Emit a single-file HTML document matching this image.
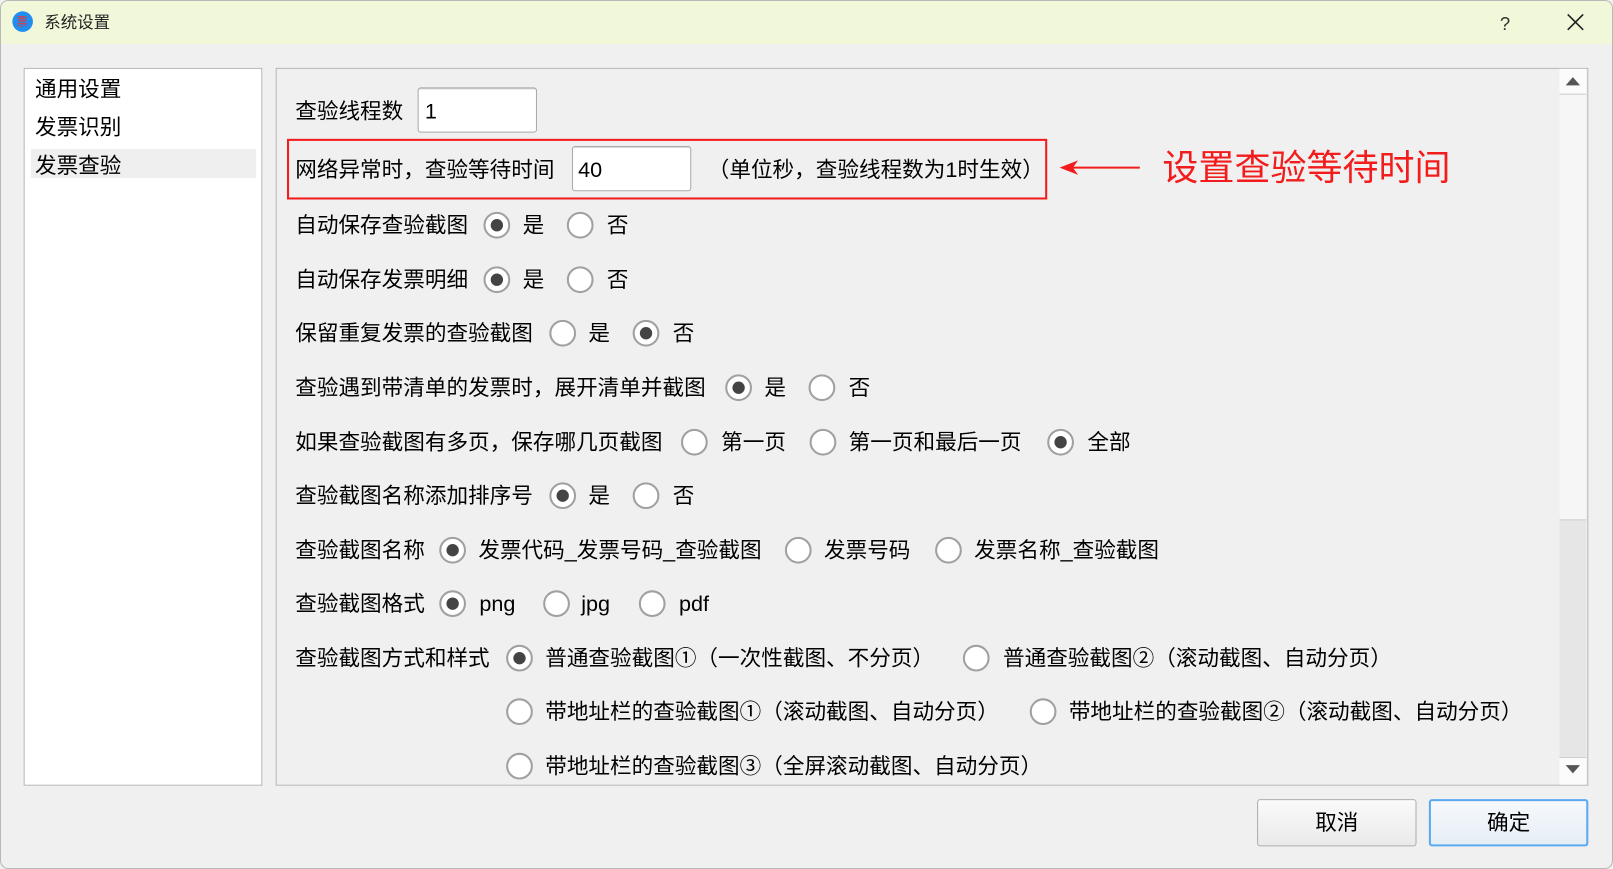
<!DOCTYPE html>
<html><head><meta charset="utf-8"><style>
html,body{margin:0;padding:0;width:1613px;height:869px;overflow:hidden;background:#f0f0f0;}
#w{position:absolute;left:0;top:0;width:1568px;height:845px;transform:scale(1.0287,1.0284);transform-origin:0 0;font-family:"Liberation Sans","Noto Sans CJK SC",sans-serif;color:#000;}
.a{position:absolute;}
.t{position:absolute;font-size:21px;line-height:30px;white-space:nowrap;margin-top:2px;}
.r{position:absolute;width:22px;height:22px;border:2px solid #a0a0a0;border-radius:50%;background:#fff;box-sizing:content-box;margin-top:1px;}
.r.c::after{content:"";position:absolute;left:5px;top:5px;width:12px;height:12px;border-radius:50%;background:#444;}
.in{position:absolute;background:#fff;border:1px solid #a8a8a8;border-radius:3px;box-shadow:inset 0 1px 0 #ddd;}
.btn{position:absolute;border:1px solid #adadad;border-radius:3px;background:linear-gradient(#fafafa,#eaeaea);font-size:21px;text-align:center;line-height:45px;}
</style></head><body><div id="w">
<div class="a" style="left:0;top:0;width:1566px;height:843px;border:1px solid #b8b8b8;border-radius:8px;background:#f0f0f0;overflow:hidden;">
<div class="a" style="left:0;top:0;width:1566px;height:42px;background:#f1f8d9;"></div>
</div>
<div class="a" style="left:12px;top:11px;width:20px;height:20px;border-radius:50%;background:#1e8ef0;"></div>
<div class="a" style="left:16px;top:13px;font-size:11px;color:#e33;">票</div>
<div class="t" style="left:43px;top:6px;font-size:16px;color:#222;">系统设置</div>
<div class="t" style="left:1458px;top:6px;font-size:18px;color:#333;">?</div>
<svg class="a" style="left:1523px;top:13px" width="17" height="17"><path d="M1 1L16 16M16 1L1 16" stroke="#222" stroke-width="1.6"/></svg>

<div class="a" style="left:23px;top:66px;width:230px;height:696px;background:#fff;border:1px solid #b8b8b8;"></div>
<div class="a" style="left:30px;top:145px;width:219px;height:28px;background:#efefef;"></div>
<div class="t" style="left:34px;top:71px;">通用设置</div>
<div class="t" style="left:34px;top:108px;">发票识别</div>
<div class="t" style="left:34px;top:145px;">发票查验</div>

<div class="a" style="left:268px;top:66px;width:1274px;height:696px;border:1px solid #b8b8b8;background:#f0f0f0;"></div>
<div class="a" style="left:1516px;top:67px;width:26px;height:695px;background:#e6e6e6;"></div>
<div class="a" style="left:1516px;top:92px;width:26px;height:413px;background:#f6f6f6;border-bottom:1px solid #ccc;"></div>
<div class="a" style="left:1516px;top:67px;width:26px;height:24px;background:#fbfbfb;border-bottom:1px solid #ccc;"></div>
<div class="a" style="left:1516px;top:736px;width:26px;height:26px;background:#fbfbfb;border-top:1px solid #ccc;"></div>
<svg class="a" style="left:1521px;top:73px" width="16" height="12"><path d="M1 10L8 2L15 10Z" fill="#555"/></svg>
<svg class="a" style="left:1521px;top:742px" width="16" height="12"><path d="M1 2L8 10L15 2Z" fill="#555"/></svg>

<div class="t" style="left:287px;top:92px;">查验线程数</div>
<div class="in" style="left:406px;top:85px;width:114px;height:42px;"></div>
<div class="t" style="left:413px;top:92px;">1</div>

<div class="a" style="left:279px;top:135px;width:735px;height:55px;border:2px solid #f21c1c;"></div>
<div class="t" style="left:287px;top:149px;">网络异常时，查验等待时间</div>
<div class="in" style="left:556px;top:142px;width:114px;height:42px;"></div>
<div class="t" style="left:562px;top:149px;">40</div>
<div class="t" style="left:688px;top:149px;">（单位秒，查验线程数为1时生效）</div>
<svg class="a" style="left:1028px;top:154px" width="82" height="18"><path d="M80 9H10" stroke="#f21c1c" stroke-width="2"/><path d="M2 9L20 2L15 9L20 16Z" fill="#f21c1c"/></svg>
<div class="t" style="left:1130px;top:140px;font-size:35px;line-height:44px;color:#f21c1c;">设置查验等待时间</div>

<div class="t" style="left:287px;top:203px;">自动保存查验截图</div>
<div class="r c" style="left:470px;top:205px"></div><div class="t" style="left:508px;top:203px;">是</div>
<div class="r" style="left:551px;top:205px"></div><div class="t" style="left:590px;top:203px;">否</div>

<div class="t" style="left:287px;top:256px;">自动保存发票明细</div>
<div class="r c" style="left:470px;top:258px"></div><div class="t" style="left:508px;top:256px;">是</div>
<div class="r" style="left:551px;top:258px"></div><div class="t" style="left:590px;top:256px;">否</div>

<div class="t" style="left:287px;top:308px;">保留重复发票的查验截图</div>
<div class="r" style="left:534px;top:310px"></div><div class="t" style="left:572px;top:308px;">是</div>
<div class="r c" style="left:615px;top:310px"></div><div class="t" style="left:654px;top:308px;">否</div>

<div class="t" style="left:287px;top:361px;">查验遇到带清单的发票时，展开清单并截图</div>
<div class="r c" style="left:705px;top:363px"></div><div class="t" style="left:743px;top:361px;">是</div>
<div class="r" style="left:786px;top:363px"></div><div class="t" style="left:825px;top:361px;">否</div>

<div class="t" style="left:287px;top:414px;">如果查验截图有多页，保存哪几页截图</div>
<div class="r" style="left:662px;top:416px"></div><div class="t" style="left:701px;top:414px;">第一页</div>
<div class="r" style="left:787px;top:416px"></div><div class="t" style="left:825px;top:414px;">第一页和最后一页</div>
<div class="r c" style="left:1018px;top:416px"></div><div class="t" style="left:1057px;top:414px;">全部</div>

<div class="t" style="left:287px;top:466px;">查验截图名称添加排序号</div>
<div class="r c" style="left:534px;top:468px"></div><div class="t" style="left:572px;top:466px;">是</div>
<div class="r" style="left:615px;top:468px"></div><div class="t" style="left:654px;top:466px;">否</div>

<div class="t" style="left:287px;top:519px;">查验截图名称</div>
<div class="r c" style="left:427px;top:521px"></div><div class="t" style="left:465px;top:519px;">发票代码_发票号码_查验截图</div>
<div class="r" style="left:763px;top:521px"></div><div class="t" style="left:801px;top:519px;">发票号码</div>
<div class="r" style="left:909px;top:521px"></div><div class="t" style="left:947px;top:519px;">发票名称_查验截图</div>

<div class="t" style="left:287px;top:571px;">查验截图格式</div>
<div class="r c" style="left:427px;top:573px"></div><div class="t" style="left:466px;top:571px;">png</div>
<div class="r" style="left:528px;top:573px"></div><div class="t" style="left:565px;top:571px;">jpg</div>
<div class="r" style="left:621px;top:573px"></div><div class="t" style="left:660px;top:571px;">pdf</div>

<div class="t" style="left:287px;top:624px;">查验截图方式和样式</div>
<div class="r c" style="left:492px;top:626px"></div><div class="t" style="left:530px;top:624px;">普通查验截图①（一次性截图、不分页）</div>
<div class="r" style="left:936px;top:626px"></div><div class="t" style="left:975px;top:624px;">普通查验截图②（滚动截图、自动分页）</div>

<div class="r" style="left:492px;top:678px"></div><div class="t" style="left:530px;top:676px;">带地址栏的查验截图①（滚动截图、自动分页）</div>
<div class="r" style="left:1001px;top:678px"></div><div class="t" style="left:1039px;top:676px;">带地址栏的查验截图②（滚动截图、自动分页）</div>

<div class="r" style="left:492px;top:731px"></div><div class="t" style="left:530px;top:729px;">带地址栏的查验截图③（全屏滚动截图、自动分页）</div>

<div class="btn" style="left:1222px;top:777px;width:153px;height:44px;">取消</div>
<div class="btn" style="left:1389px;top:777px;border:2px solid #5aaaf2;height:42px;width:151px;line-height:43px;background:linear-gradient(#f6f9fc,#e6eef6);">确定</div>
</div></body></html>
